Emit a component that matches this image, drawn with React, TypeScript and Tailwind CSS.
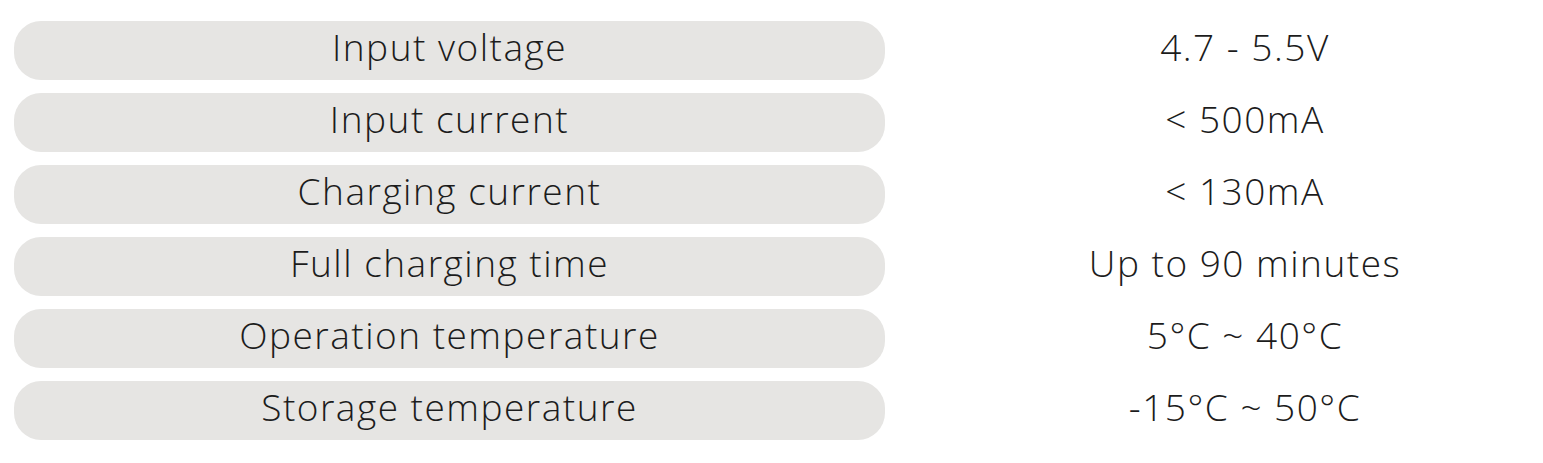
import React from 'react';

const specs: [string, string][] = [
  ['Input voltage', '4.7 - 5.5V'],
  ['Input current', '< 500mA'],
  ['Charging current', '< 130mA'],
  ['Full charging time', 'Up to 90 minutes'],
  ['Operation temperature', '5°C ~ 40°C'],
  ['Storage temperature', '-15°C ~ 50°C'],
];

export default function App() {
  return (
    <div className="w-[1543px] h-[463px] bg-white pt-[21px] pl-[14px] flex flex-col gap-[13px] font-['Open_Sans',sans-serif] font-light text-[#1c1c1c] tracking-[1.5px]">
      {specs.map(([label, value]) => (
        <div key={label} className="flex items-center h-[59px]">
          <div className="w-[871px] h-full rounded-[27px] bg-[#e6e5e3] flex items-center justify-center pb-[8px] text-[37px] leading-none">
            {label}
          </div>
          <div className="flex-1 ml-[62px] h-full flex items-center justify-center pb-[8px] text-[37px] leading-none">{value}</div>
        </div>
      ))}
    </div>
  );
}
